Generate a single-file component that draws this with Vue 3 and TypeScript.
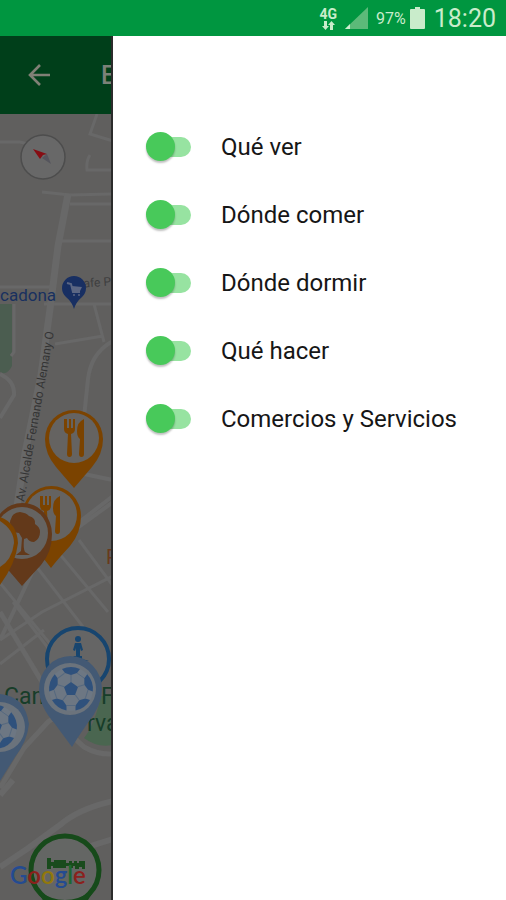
<script setup lang="ts">
import { reactive } from 'vue'

interface Layer {
  id: string
  label: string
  on: boolean
}

const layers = reactive<Layer[]>([
  { id: 'ver', label: 'Qué ver', on: true },
  { id: 'comer', label: 'Dónde comer', on: true },
  { id: 'dormir', label: 'Dónde dormir', on: true },
  { id: 'hacer', label: 'Qué hacer', on: true },
  { id: 'comercios', label: 'Comercios y Servicios', on: true },
])

const patchAngles: number[] = [0, 72, 144, 216, 288]
</script>

<template>
  <div class="screen">
    <header class="status">
      <span class="network">
        <span class="network-type">4G</span>
        <svg width="14" height="9" viewBox="0 0 14 9" aria-hidden="true">
          <path d="M3 0h3v5h2L4.500 9 1 5h2zM9 9h3V4h2L10.500 0 7 4h2z" fill="#c9eccb" />
        </svg>
      </span>
      <svg class="signal" width="24" height="23" viewBox="0 0 24 23" aria-hidden="true">
        <path d="M23 0v22H0z" fill="#5cba79" />
        <path d="M5 17v5H0z" fill="#cdeecf" />
      </svg>
      <span class="percent">97%</span>
      <svg class="battery" width="15" height="22" viewBox="0 0 15 22" aria-hidden="true">
        <path d="M5 0h5v2h4q1 0 1 1v18q0 1-1 1H1q-1 0-1-1V3q0-1 1-1h4z" fill="#c9eccb" />
      </svg>
      <time class="clock">18:20</time>
    </header>

    <div class="body">
      <section class="behind">
        <div class="toolbar">
          <button class="back" type="button" aria-label="Atrás">
            <svg width="24" height="24" viewBox="0 0 24 24" aria-hidden="true">
              <path d="M23 12H3M13 2 3 12l10 10" fill="none" stroke="#808076" stroke-width="2.600" />
            </svg>
          </button>
          <h1 class="title">E</h1>
        </div>

        <svg class="map" viewBox="0 114 113 786" preserveAspectRatio="xMinYMin slice">
          <defs>
            <g id="cutlery">
              <path d="M-11-18v10q0 4 4 5l-1 20q0 3 2.500 3t2.500-3l-1-20q4-1 4-5v-10h-2v9h-2v-9h-2v9h-2v-9z" />
              <path d="M9-18q-7 3-7 12 0 6 3 8l-1 15q0 3 2.500 3T9 17z" />
            </g>
            <g id="ball">
              <circle r="22" fill="#6d7783" />
              <path d="M0-7 7-2 4 6h-8l-3-8z" fill="#2f517c" />
              <g v-for="angle in patchAngles" :key="angle" :transform="`rotate(${angle})`">
                <path d="M-9-20Q0-24 9-20L6-16 0-14l-6-2z" fill="#2f517c" />
                <path d="M0-14v7M6-16l7 5" fill="none" stroke="#56697f" stroke-width="1" />
              </g>
            </g>
          </defs>

          <rect y="114" width="113" height="786" fill="#605f5e" />
          <path d="M0 304h12v62q-5 10-12 6z" fill="#4b5d50" />
          <path d="M84 738q10-12 17-42h12v49q-16 3-29-7z" fill="#4a6650" />

          <g fill="none" stroke="#686868" stroke-width="3">
            <path d="M97 114 90 134l23 7M0 142h20l12 3M113 170H87q-1-9 3-15M42 192l28 3 43-1M70 204h43M62 241h51M0 287h52M44 304h69M14 304v48l-3 4M55 344l48-8M94 304l10 38" />
            <path d="M68 194 58 246l-8 63-9 66-16 78-9 60" stroke-width="7" />
            <path d="M113 341q-22 12-25 38l-4 38M0 374q15 7 14 21L0 418M84 474l29 6M113 496 78 523 41 554 0 640M61 540l52-38" stroke-width="4" />
            <path d="M36 566 101 650M58 552l50 60M79 540l34 46M0 583l70 85M13 602l48 63M0 640l42-28 71-36M0 664l44-34" />
            <path d="M0 612l45 75q17 42 39 60 14 8 29 7M0 788l24-40 24-26 18-12" stroke-width="5" />
            <path d="M113 801q-35 8-53 24L27 849 0 867M78 850l35-11M0 795l13-15" stroke-width="6" />
          </g>

          <circle cx="43" cy="157" r="22" fill="#686868" stroke="#4d4d4d" stroke-width="1.500" />
          <path d="m42 158 5-4 4 10z" fill="#55555d" />
          <path d="m33 149 14 5-4 1-3 4z" fill="#860d13" />

          <g class="place">
            <text x="0" y="301" font-size="17" fill="#18305f">cadona</text>
            <text x="76" y="288" font-size="12" fill="#3e3e3e" transform="rotate(-4 76 288)">Cafe P</text>
            <text x="24" y="502" font-size="12" fill="#343434" transform="rotate(-80 24 502)">Av. Alcalde Fernando Alemany O</text>
          </g>
          <path d="M74 309q-2-7-8-12a12 12 0 1 1 16 0q-6 5-8 12z" fill="#182f62" />
          <path d="m67 283 4 1 2 8h7" fill="none" stroke="#5b6683" stroke-width="2" />
          <path d="m72 286 10 1-2 4h-7z" fill="#5b6683" />
          <circle cx="74" cy="295" r="1" fill="#5b6683" />
          <circle cx="79" cy="295" r="1" fill="#5b6683" />

          <!-- restaurants -->
          <path d="M74 488q-6-7-18-21-11-13-11-28a29 29 0 0 1 58 0q0 15-11 28-12 14-18 21z" fill="#7b4300" />
          <circle cx="74" cy="438" r="25" fill="#656361" />
          <use href="#cutlery" x="75" y="437" fill="#7b4300" />
          <path d="M51 568q-6-8-18-22-11-13-11-30a29.500 30 0 0 1 59 0q0 17-11 30-13 14-19 22z" fill="#7b4300" />
          <circle cx="51" cy="515" r="26" fill="#656361" />
          <use href="#cutlery" x="51" y="514" fill="#7b4300" />

          <!-- park -->
          <path d="M22 586q-6-7-18-21-11-13-11-31a29.500 31 0 0 1 59 0q0 18-11 31-13 14-19 21z" fill="#63391a" />
          <circle cx="22" cy="533" r="26" fill="#656361" />
          <path d="M11 519q1-6 9-7 7 1 9 4 7 2 6 8 5 3 5 8 0 7-6 10-5 0-7-4l-3 1q-1 9 1 13l5 3H16l5-4 1-13-3-5-6-1-2-6q-2-4 0-7z" fill="#63391a" />
          <path d="M0 517q17 6 18 26-2 20-18 42z" fill="#7b4300" />
          <path d="M0 521q14 9 14 22-2 17-14 24z" fill="#656361" />
          <text class="place" x="106" y="564" font-size="20" fill="#693a1b">P</text>

          <!-- sights and sports -->
          <circle cx="78" cy="659" r="31" fill="#656565" stroke="#17456f" stroke-width="4" />
          <circle cx="78" cy="639" r="3" fill="#17456f" />
          <path d="M75 643h6l2 7-2 1-1-3v8h-4v-8l-1 3-2-1zM74 656h8v3l7 2H70z" fill="#17456f" />
          <g class="place" fill="#173d29" font-size="23">
            <text x="4" y="704">Can</text>
            <text x="101" y="704">Fú</text>
            <text x="87" y="731">rva</text>
          </g>
          <path d="M72 747q-6-8-17-23-16-18-16-35a31.500 33 0 0 1 63 0q0 17-15 35-11 16-15 23z" fill="#435974" />
          <circle cx="70" cy="689" r="26" fill="#6b737c" />
          <use href="#ball" x="71" y="689" />
          <path d="M0 694q25 2 29 30-2 18-14 33L0 781z" fill="#435974" />
          <circle cx="0" cy="727" r="25" fill="#6b737c" />
          <use href="#ball" x="-5" y="727" />

          <!-- shop -->
          <path d="M32 884h66l-10 16H43z" fill="#164a1a" />
          <circle cx="65" cy="870" r="34" fill="#646664" stroke="#164a1a" stroke-width="5" />
          <path d="M38 891q27 18 54 0l-5 9H43z" fill="#164a1a" />
          <path d="M47 858h4v4h3v-2h12v3h3v-2h3v2h2v-2h3v2h2v-2h6v8h-3v-2h-3v2h-4v-3h-2v2h-4v-2h-3v2H53v-2h-2v3h-4z" fill="#194b1d" />
          <text class="logo" x="10" y="884" font-size="24">
            <tspan fill="#244b91">G</tspan><tspan fill="#8b211d">o</tspan><tspan fill="#92780c">o</tspan><tspan fill="#244b91">g</tspan><tspan fill="#1c6932">l</tspan><tspan fill="#8b211d">e</tspan>
          </text>
        </svg>
      </section>

      <aside class="drawer">
        <ul class="layers">
          <li v-for="layer in layers" :key="layer.id">
            <label class="row" :for="layer.id">
              <input :id="layer.id" v-model="layer.on" class="switch" type="checkbox" role="switch" />
              <span>{{ layer.label }}</span>
            </label>
          </li>
        </ul>
      </aside>
    </div>
  </div>
</template>

<style>
body {
  margin: 0;
}
</style>

<style scoped>
.screen {
  display: flex;
  flex-direction: column;
  height: 100vh;
  font-family: Roboto, "Liberation Sans", sans-serif;
  background: #fff;
}

.status {
  display: flex;
  flex: none;
  align-items: center;
  justify-content: flex-end;
  height: 36px;
  padding-right: 10px;
  box-sizing: border-box;
  background: #009640;
  color: #c9eccb;
}

.network {
  display: flex;
  flex-direction: column;
  align-items: center;
  margin-right: 8px;
}

.network-type {
  font-size: 14px;
  font-weight: 700;
  line-height: 14px;
}

.signal {
  margin-right: 7px;
}

.percent {
  margin-right: 4px;
  font-size: 16px;
}

.battery {
  margin-right: 9px;
}

.clock {
  padding-top: 2px;
  font-size: 25px;
  line-height: 32px;
}

.body {
  display: flex;
  flex: 1;
  min-height: 0;
}

.behind {
  display: flex;
  flex: none;
  flex-direction: column;
  width: 113px;
  box-sizing: border-box;
  overflow: hidden;
  border-right: 2px solid #2b2b2b;
  background: #605f5e;
}

.toolbar {
  display: flex;
  flex: none;
  align-items: center;
  height: 78px;
  padding-left: 27px;
  background: #003f1a;
}

.back {
  display: flex;
  flex: none;
  margin-right: 50px;
  padding: 0;
  border: 0;
  background: none;
}

.title {
  margin: 0;
  color: #7b8178;
  font-size: 25px;
  font-weight: 500;
}

.map {
  display: block;
  flex: 1;
  width: 113px;
  min-height: 0;
}

.place {
  font-family: Roboto, sans-serif;
}

.logo {
  font-family: Lato, sans-serif;
  font-weight: 600;
}

.drawer {
  flex: 1;
  min-width: 0;
  background: #fff;
}

.layers {
  margin: 0;
  padding: 78px 16px 0 33px;
  list-style: none;
}

.row {
  display: flex;
  align-items: center;
  gap: 29px;
  height: 67px;
  padding-bottom: 1px;
  box-sizing: border-box;
  color: #161616;
  font-size: 24px;
}

.layers li + li {
  padding-top: 1px;
}

.switch {
  position: relative;
  flex: none;
  width: 46px;
  height: 30px;
  margin: 0;
  appearance: none;
}

.switch::before {
  position: absolute;
  inset: 5px 1px 5px 4px;
  border-radius: 10px;
  background: #97e3a1;
  content: "";
}

.switch::after {
  position: absolute;
  top: 0;
  left: 0;
  width: 29px;
  height: 29px;
  border-radius: 50%;
  background: #48c95a;
  box-shadow: 0 2px 2px rgba(0, 0, 0, 0.25);
  content: "";
}

.switch:not(:checked)::before {
  background: #d0d0d0;
}

.switch:not(:checked)::after {
  background: #f1f1f1;
}
</style>
